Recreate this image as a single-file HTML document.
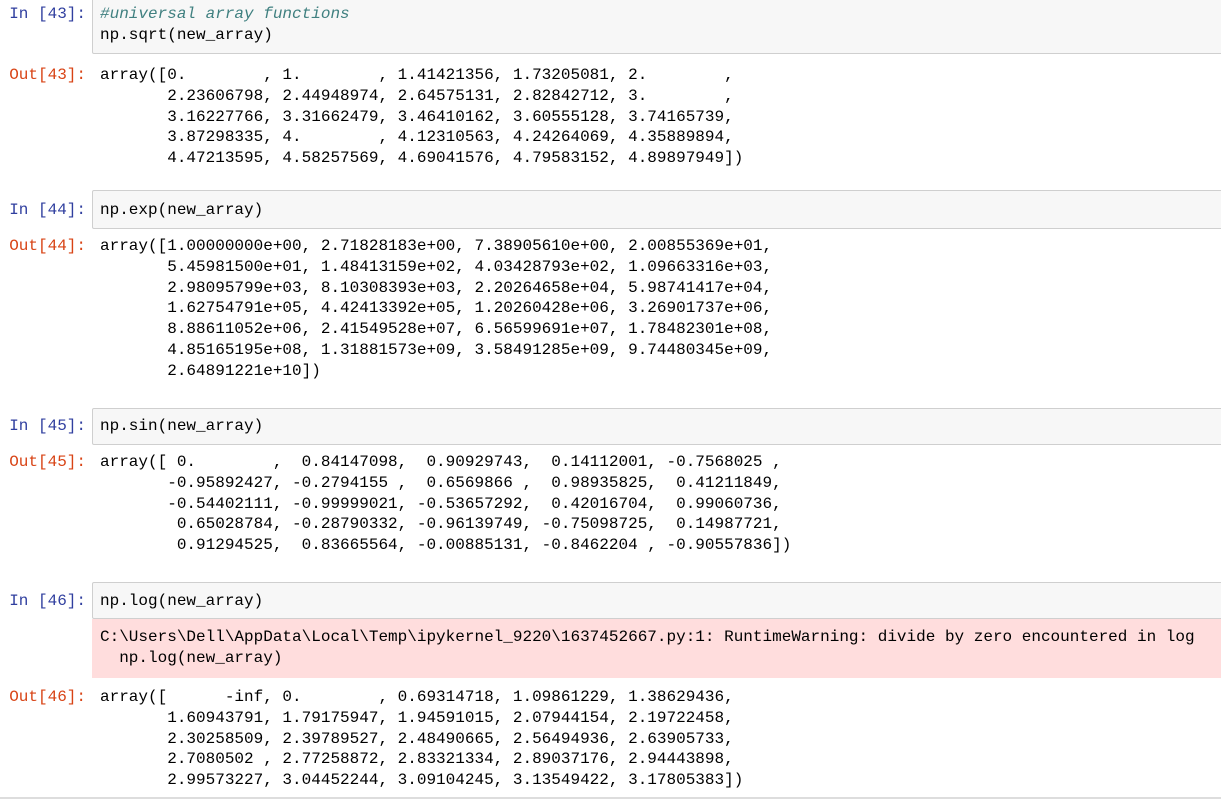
<!DOCTYPE html>
<html><head><meta charset="utf-8"><style>
body{margin:0;width:1221px;height:801px;background:#fff;position:relative;overflow:hidden;font-family:"Liberation Mono",monospace;font-size:16px;line-height:20.8px;color:#000}
.t{position:absolute;left:100px;white-space:pre;margin:0}
.p{position:absolute;left:0;width:86px;text-align:right;white-space:pre}
.in{color:#303F9F}.out{color:#D84315}
.box{position:absolute;left:92px;width:1140px;background:#f7f7f7;border:1px solid #cfcfcf;border-radius:2px;box-sizing:border-box}
.err{position:absolute;left:92px;width:1140px;background:#fdd}
.c{color:#408080;font-style:italic}
</style></head><body>
<div class="box" style="top:-3px;height:57px"></div>
<div class="p in" style="top:4px">In [43]:</div>
<div class="t" style="top:4px"><span class="c">#universal array functions</span>
np.sqrt(new_array)</div>
<div class="p out" style="top:65px">Out[43]:</div>
<div class="t" style="top:65px">array([0.        , 1.        , 1.41421356, 1.73205081, 2.        ,
       2.23606798, 2.44948974, 2.64575131, 2.82842712, 3.        ,
       3.16227766, 3.31662479, 3.46410162, 3.60555128, 3.74165739,
       3.87298335, 4.        , 4.12310563, 4.24264069, 4.35889894,
       4.47213595, 4.58257569, 4.69041576, 4.79583152, 4.89897949])</div>

<div class="box" style="top:190px;height:39px"></div>
<div class="p in" style="top:200px">In [44]:</div>
<div class="t" style="top:200px">np.exp(new_array)</div>
<div class="p out" style="top:236px">Out[44]:</div>
<div class="t" style="top:236px">array([1.00000000e+00, 2.71828183e+00, 7.38905610e+00, 2.00855369e+01,
       5.45981500e+01, 1.48413159e+02, 4.03428793e+02, 1.09663316e+03,
       2.98095799e+03, 8.10308393e+03, 2.20264658e+04, 5.98741417e+04,
       1.62754791e+05, 4.42413392e+05, 1.20260428e+06, 3.26901737e+06,
       8.88611052e+06, 2.41549528e+07, 6.56599691e+07, 1.78482301e+08,
       4.85165195e+08, 1.31881573e+09, 3.58491285e+09, 9.74480345e+09,
       2.64891221e+10])</div>

<div class="box" style="top:408px;height:37px"></div>
<div class="p in" style="top:416px">In [45]:</div>
<div class="t" style="top:416px">np.sin(new_array)</div>
<div class="p out" style="top:452px">Out[45]:</div>
<div class="t" style="top:452px">array([ 0.        ,  0.84147098,  0.90929743,  0.14112001, -0.7568025 ,
       -0.95892427, -0.2794155 ,  0.6569866 ,  0.98935825,  0.41211849,
       -0.54402111, -0.99999021, -0.53657292,  0.42016704,  0.99060736,
        0.65028784, -0.28790332, -0.96139749, -0.75098725,  0.14987721,
        0.91294525,  0.83665564, -0.00885131, -0.8462204 , -0.90557836])</div>

<div class="box" style="top:582px;height:37px"></div>
<div class="err" style="top:619px;height:59px"></div>
<div class="p in" style="top:591px">In [46]:</div>
<div class="t" style="top:591px">np.log(new_array)</div>
<div class="t" style="top:627px">C:\Users\Dell\AppData\Local\Temp\ipykernel_9220\1637452667.py:1: RuntimeWarning: divide by zero encountered in log
  np.log(new_array)</div>
<div class="p out" style="top:687px">Out[46]:</div>
<div class="t" style="top:687px">array([      -inf, 0.        , 0.69314718, 1.09861229, 1.38629436,
       1.60943791, 1.79175947, 1.94591015, 2.07944154, 2.19722458,
       2.30258509, 2.39789527, 2.48490665, 2.56494936, 2.63905733,
       2.7080502 , 2.77258872, 2.83321334, 2.89037176, 2.94443898,
       2.99573227, 3.04452244, 3.09104245, 3.13549422, 3.17805383])</div>
<div style="position:absolute;left:0;top:797px;width:1221px;height:2px;background:#ddd"></div>
</body></html>
